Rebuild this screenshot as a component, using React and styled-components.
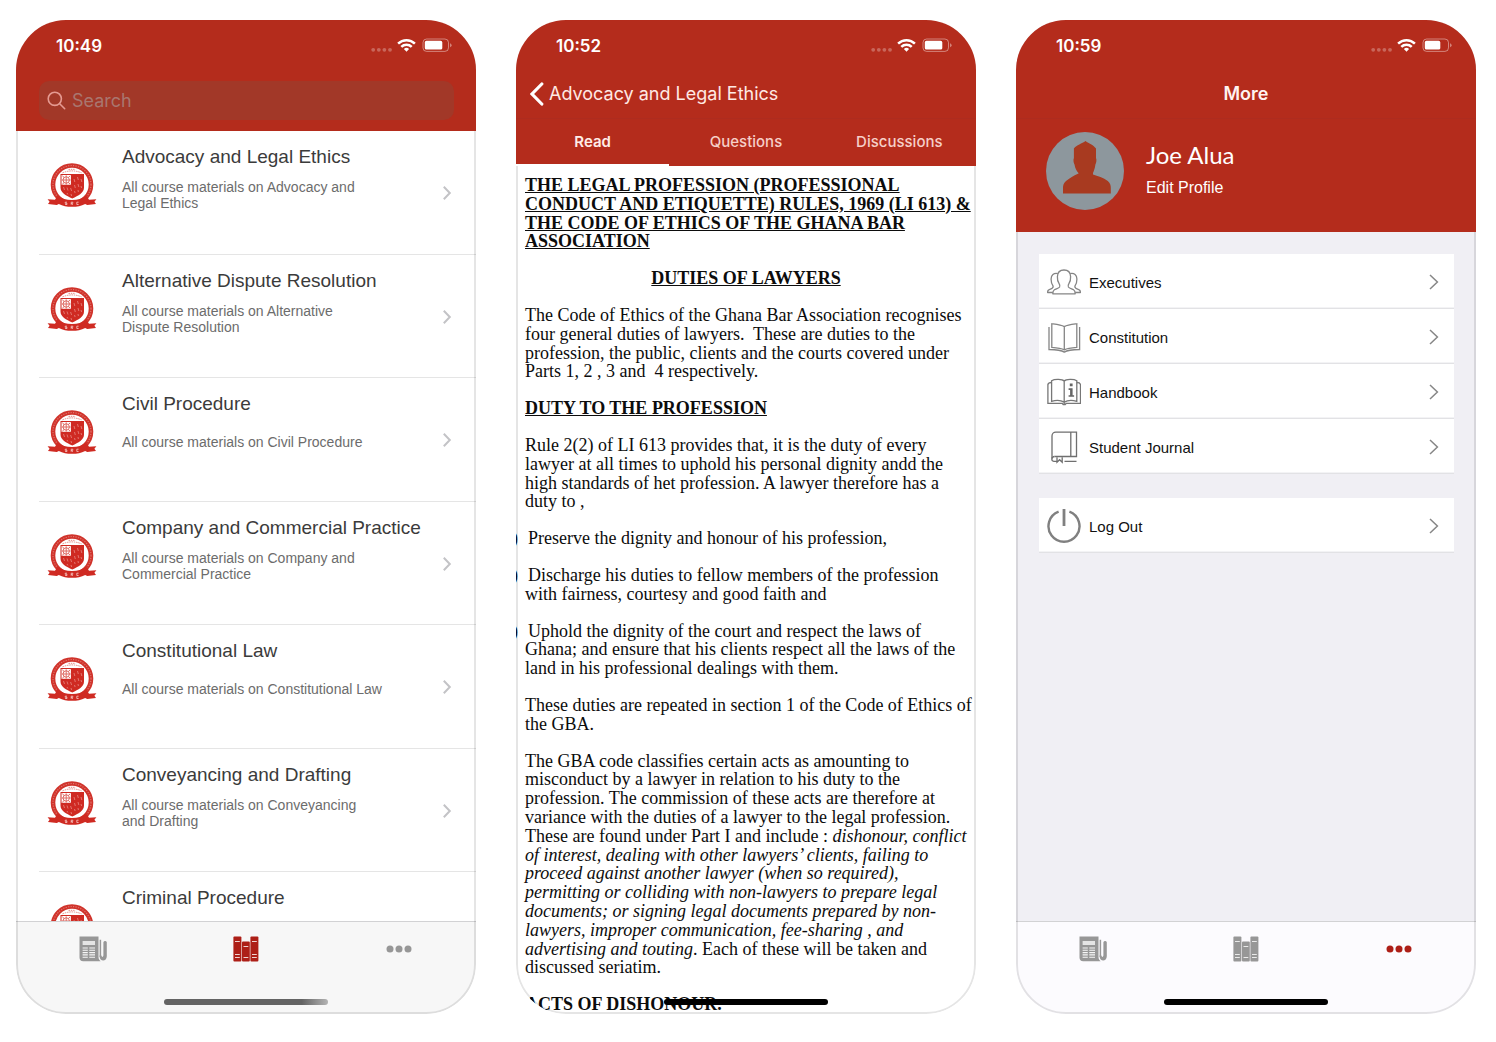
import React from "react";
import styled, { createGlobalStyle } from "styled-components";

const RED = "#b42c1c";
const SANS = '"Liberation Sans", Arial, sans-serif';
const SYSTEM = 'Inter, "Liberation Sans", sans-serif';
const SERIF = '"Liberation Serif", "Times New Roman", serif';

const GlobalStyle = createGlobalStyle`
  *, *::before, *::after { box-sizing: border-box; }
  body { margin: 0; background: #fff; font-family: ${SANS}; }
  h1, h2, h3, p, ul, ol { margin: 0; padding: 0; }
  ul, ol { list-style: none; }
  button { border: 0; background: none; padding: 0; font: inherit; color: inherit; cursor: pointer; }
  a { color: inherit; text-decoration: none; }
  svg { display: block; flex: none; }
`;

const Gallery = styled.main`
  display: grid;
  grid-template-columns: repeat(3, minmax(0, 1fr));
  gap: 40px;
  padding: 20px 20px 28px 16px;
`;

const Phone = styled.section`
  position: relative;
  display: flex;
  flex-direction: column;
  aspect-ratio: 230 / 497;
  min-height: 0;
  overflow: hidden;
  border-radius: 50px;
  background: ${(p) => p.$bg || "#fff"};
`;

const Header = styled.header`
  position: relative;
  z-index: 2;
  flex: none;
  background: ${RED};
  color: #fff;
`;

const Content = styled.div`
  flex: 1;
  min-height: 0;
  display: flex;
  flex-direction: column;
`;

const Outline = styled.div`
  position: absolute;
  inset: 0;
  z-index: 1;
  border: 2px solid rgba(0, 0, 0, 0.1);
  border-radius: 50px;
  pointer-events: none;
`;

const HomeIndicator = styled.div`
  position: absolute;
  left: 50%;
  bottom: 9px;
  width: 164px;
  height: 6px;
  margin-left: -82px;
  border-radius: 3px;
  background: ${(p) => (p.$faded ? "linear-gradient(90deg, #646464 0 84%, #b4b4b4 100%)" : "#000")};
`;

/* Status bar */

const StatusRow = styled.div`
  display: flex;
  align-items: center;
  height: 50px;
  padding: 0 24px 0 40px;
  font-family: ${SYSTEM};
`;

const Time = styled.time`
  flex: 1;
  padding-top: 1px;
  font-size: 17px;
  font-weight: 600;
  line-height: 24px;
`;

function StatusBar({ time, charge }) {
  return (
    <StatusRow>
      <Time>{time}</Time>
      <svg width="82" height="18" viewBox="0 0 82 18" aria-hidden="true">
        <g fill="#fff" opacity="0.28">
          <circle cx="3.2" cy="13.8" r="1.9" />
          <circle cx="8.8" cy="13.8" r="1.9" />
          <circle cx="14.4" cy="13.8" r="1.9" />
          <circle cx="20" cy="13.8" r="1.9" />
        </g>
        <g fill="none" stroke="#fff" strokeWidth="2.5">
          <path d="M28.1 7.6a12 12 0 0 1 16.8 0" />
          <path d="M31.3 10.9a7.4 7.4 0 0 1 10.4 0" />
        </g>
        <path fill="#fff" d="M33.9 13.1a3.7 3.7 0 0 1 5.2 0l-2.6 2.7z" />
        <rect x="53" y="3" width="25.5" height="12.4" rx="3.6" fill="none" stroke="#fff" strokeOpacity="0.42" />
        <rect x="54.8" y="4.8" width={charge} height="8.8" rx="1.6" fill="#fff" />
        <path d="M80.2 7.2a2.2 2.2 0 0 1 0 4z" fill="#fff" fillOpacity="0.5" />
      </svg>
    </StatusRow>
  );
}

/* Icons */

const Chevron = ({ color }) => (
  <svg width="10" height="16" viewBox="0 0 10 16" fill="none" stroke={color} strokeWidth="1.5" aria-hidden="true">
    <path d="M1 1l7.4 7L1 15" />
  </svg>
);

const SmallChevron = ({ color }) => (
  <svg width="10" height="16" viewBox="0 0 10 16" fill="none" stroke={color} strokeWidth="2" aria-hidden="true">
    <path d="M1.800 1.800L7.800 8l-6 6.200" />
  </svg>
);

const NewsIcon = () => (
  <svg width="28" height="26" viewBox="0 0 28 26" aria-hidden="true">
    <path fill="currentColor" d="M.5.5h19v20.400c0 1.700.6 3 2.200 4.300H4.200A3.700 3.700 0 0 1 .5 21.500z" />
    <path fill="none" stroke="currentColor" strokeWidth="1.500" d="M21.400 3.800v17.200" />
    <path fill="currentColor" d="M20.600 19.500h1.800c.3 1.800 1.700 1.900 2 0V6.200a1.800 1.800 0 0 1 3.400 0v14c0 5.600-7.200 5.600-7.200 0z" />
    <rect x="3.600" y="5" width="12.400" height="4" fill="#f7f7f7" opacity=".8" />
    <path stroke="#f7f7f7" strokeWidth="1.100" d="M3.600 12h5.200M3.600 14.300h5.200M3.600 16.600h5.200M3.600 18.900h5.200M3.600 21.200h5.200M10.300 12H16M10.300 14.300H16M10.300 16.600H16M10.300 18.900H16M10.300 21.200H16" />
  </svg>
);

const BooksIcon = () => (
  <svg width="26" height="26" viewBox="0 0 26 26" aria-hidden="true">
    <g fill="currentColor">
      <rect x=".4" y=".5" width="8" height="25" rx="1" />
      <rect x="9" y="5.600" width="7.800" height="19.900" rx="1" />
      <rect x="17.400" y=".5" width="8" height="25" rx="1" />
    </g>
    <path stroke="#fff" strokeWidth=".9" opacity=".9" d="M2 5.500h4.800M2 18.500h4.800M2 21.500h4.800M10.500 10.500h4.800M10.500 21.500h4.800M19 5.500h4.800M19 18.500h4.800M19 21.500h4.800" />
  </svg>
);

const DotsIcon = () => (
  <svg width="26" height="8" viewBox="0 0 26 8" fill="currentColor" aria-hidden="true">
    <circle cx="4" cy="4" r="3.500" />
    <circle cx="13" cy="4" r="3.500" />
    <circle cx="22" cy="4" r="3.500" />
  </svg>
);

const Seal = () => (
  <svg width="50" height="44" viewBox="0 0 50 44" aria-hidden="true">
    <circle cx="25" cy="21.500" r="19" fill="#fff" stroke="#d0332b" strokeWidth="4.600" />
    <circle cx="25" cy="21.500" r="19" fill="none" stroke="#e0736c" strokeWidth="1.200" strokeDasharray="1.200 1.300" />
    <path fill="none" stroke="#e58a84" strokeWidth="1" strokeDasharray="1.500 .8" d="M15.500 9.800q9.500-3.800 19 0M21.500 6.300h7" />
    <path fill="#cf2a22" d="M13.500 11h23.500v13.500c0 5.500-5.600 8-11.700 11-6.200-3-11.800-5.500-11.800-11z" />
    <path fill="#fff" d="M14.500 12h9.400v9.800h-9.400z" />
    <g fill="none" stroke="#df6a63" strokeWidth="1">
      <circle cx="19.200" cy="17" r="3.200" />
      <path d="M19.200 12.400v9.200M14.800 17h8.800M15.300 12.800l2 1.800M23.200 12.800l-2 1.800M15.300 21.200l2-1.800M23.200 21.200l-2-1.800" />
    </g>
    <path
      stroke="#e47e77"
      strokeWidth=".9"
      fill="none"
      d="M27 16l.8 3M30.500 14l.8 3M34 16l.8 3M27.500 22l.8 3M31 21l.8 3M34 23l.6 2M16.500 24l1 3M20 24.500l1 3M23.600 25l1 3M27.500 28l.6 2M31 27l.4 2M20 30l.8 1.500M24 31l.6 2"
    />
    <path fill="#cf2a22" d="M.6 36.200l7.400.6 2.600-4.300c4 3.300 8.600 4.600 14.400 4.600s10.400-1.300 14.400-4.600l2.600 4.300 7.400-.6-2 2.600 1.600 2.300-8.800.8-2-1c-4 2-8 2.900-13.200 2.900s-9.200-.9-13.200-2.900l-2 1-8.800-.8 1.600-2.300z" />
    <path stroke="#f6c9c5" strokeWidth=".8" fill="none" d="M20 39.200h-1.800v1.100H20v1.200h-1.900M24.200 41.800v-2.600h1.600v1.200h-1.400l1.500 1.400M31.600 39.200h-1.800v2.300h1.800" />
  </svg>
);

const PeopleIcon = () => (
  <svg width="34" height="34" viewBox="1 0 34 34" fill="none" stroke="#858585" strokeWidth="1.300" strokeLinejoin="round" aria-hidden="true">
    <path d="M6.800 28.800h22.400c0-2-.2-3.200-1.600-4-1.800-1-4.400-1.400-5.200-2.800-.5-1-.2-2.300.5-3.300 1.400-2 1.900-4 1.700-7.200C24.400 7.200 21.700 5 18 5s-6.400 2.200-6.600 6.500c-.2 3.200.3 5.200 1.700 7.200.7 1 1 2.300.5 3.300-.8 1.400-3.400 1.800-5.200 2.800-1.400.8-1.600 2-1.600 4z" />
    <path d="M11.800 8.600c-4-.8-6.800 1.300-6.700 5.600.1 2.800.3 4.200 1.500 6 .8 1.200.6 2.200-.3 2.900-1.400.9-3.200 1.200-4 2.100-.6.700-.7 1.300-.7 2.300h5.300M24.200 8.600c4-.8 6.800 1.300 6.700 5.600-.1 2.800-.3 4.200-1.500 6-.8 1.200-.6 2.200.3 2.900 1.400.9 3.200 1.200 4 2.100.6.700.7 1.300.7 2.300h-5.300" />
  </svg>
);

const OpenBookIcon = () => (
  <svg width="34" height="34" viewBox="1 1 34 34" fill="none" stroke="#858585" strokeWidth="1.300" aria-hidden="true">
    <path d="M18.300 7.600C15 5.800 10.600 5.400 5.800 4.800v23.600c4.800.4 9.200.8 12.500 2.400 3.300-1.600 7.700-2 12.500-2.400V4.800c-4.800.6-9.200 1-12.500 2.800zM18.300 7.600v23.200" />
    <path d="M3 8v22.500c5.800.1 12.200.6 15.300 2.600 3.100-2 9.500-2.500 15.300-2.600V8" />
  </svg>
);

const InfoBookIcon = () => (
  <svg width="34" height="34" viewBox="1 1 34 34" fill="none" stroke="#777" strokeWidth="1.300" aria-hidden="true">
    <path d="M18.200 7c-1.800-2-9.600-2.200-12.600-.3v20.600c4-1.300 9.600-1 12.600.8 3-1.800 8.600-2.100 12.600-.8V6.700c-3-1.900-10.800-1.700-12.600.3zM18.200 7v24" />
    <path d="M5.600 8.500c-2 0-3.400.6-3.700 2v18.800h14.300l1 1.200h2l1-1.200h14.300V10.500c-.3-1.400-1.700-2-3.700-2" />
    <path fill="#666" stroke="none" d="M23.800 9.600h2.800v2.600h-2.800zM22.600 14.300h4v6.900h1.500v1.600h-5.500v-1.600h1.500v-5.300h-1.500z" />
  </svg>
);

const JournalIcon = () => (
  <svg width="34" height="34" viewBox="1 1 34 34" fill="none" stroke="#6f6f6f" strokeWidth="1.300" aria-hidden="true">
    <path d="M8.500 27.500h22V3.200H9.800A3.800 3.800 0 0 0 6 7v22.500M24.800 3.200v24.300" />
    <path d="M8.500 27.500C5.200 27.800 5 32 7.800 32.400h2.700M11 28.300v5l2.600-2.600 2.600 2.600v-5M18.500 32.400h12" />
  </svg>
);

const PowerIcon = () => (
  <svg width="34" height="34" viewBox="1 1 34 34" fill="none" stroke="#808080" strokeWidth="2.400" aria-hidden="true">
    <path d="M12.600 3.700a15.500 15.500 0 1 0 10.800 0" />
    <path strokeWidth="2.800" d="M18 1v17" />
  </svg>
);

/* Bottom tab bar */

const TabNav = styled.nav`
  display: grid;
  grid-template-columns: repeat(3, 1fr);
  flex: none;
  height: 93px;
  padding-bottom: 38px;
  border-top: 1px solid #d2d2d4;
  background: ${(p) => p.$bg};
`;

const TabButton = styled.button`
  display: grid;
  place-items: center;
  color: ${(p) => (p.$active ? "#ad1f17" : "#979797")};
`;

function TabBar({ active, bg }) {
  return (
    <TabNav $bg={bg} aria-label="Main">
      <TabButton type="button" aria-label="News" $active={active === "news"}><NewsIcon /></TabButton>
      <TabButton type="button" aria-label="Courses" $active={active === "courses"}><BooksIcon /></TabButton>
      <TabButton type="button" aria-label="More" $active={active === "more"}><DotsIcon /></TabButton>
    </TabNav>
  );
}

/* Courses screen */

const SearchBox = styled.label`
  display: flex;
  align-items: center;
  gap: 6px;
  height: 39px;
  margin: 11px 22px 0 23px;
  padding: 0 8px;
  border-radius: 10px;
  background: #a23828;
`;

const SearchInput = styled.input`
  flex: 1;
  min-width: 0;
  border: 0;
  padding: 0;
  outline: 0;
  background: none;
  color: #fff;
  font: 400 18px/24px ${SYSTEM};
  &::placeholder { color: #a9766f; opacity: 1; }
`;

const HeaderSpace = styled.div`
  height: 11px;
`;

const CourseList = styled.ul`
  flex: 1;
  min-height: 0;
  overflow: hidden;
  display: grid;
  grid-template-rows: repeat(6, minmax(0, 1fr)) 49px;
  padding-left: 23px;
`;

const CourseItem = styled.li`
  border-bottom: 1px solid #e5e5e5;
  &:last-child { border-bottom: 0; }
`;

const CourseLink = styled.a`
  display: grid;
  grid-template-columns: 50px minmax(0, 1fr) 10px;
  column-gap: 25px;
  height: 100%;
  padding: 14px 24px 0 8px;
`;

const SealSlot = styled.span`
  padding-top: 18px;
`;

const ChevronSlot = styled.span`
  padding-top: 40px;
`;

const CourseTitle = styled.h2`
  color: #3b3b3b;
  font-size: 19px;
  font-weight: 400;
  line-height: 24px;
  white-space: nowrap;
`;

const CourseNote = styled.p`
  display: flex;
  align-items: center;
  height: 32px;
  margin-top: 10px;
  color: #6c6c6c;
  font-size: 14px;
  line-height: 16px;
  white-space: pre-line;
`;

const courses = [
  ["Advocacy and Legal Ethics", "All course materials on Advocacy and\nLegal Ethics"],
  ["Alternative Dispute Resolution", "All course materials on Alternative\nDispute Resolution"],
  ["Civil Procedure", "All course materials on Civil Procedure"],
  ["Company and Commercial Practice", "All course materials on Company and\nCommercial Practice"],
  ["Constitutional Law", "All course materials on Constitutional Law"],
  ["Conveyancing and Drafting", "All course materials on Conveyancing\nand Drafting"],
  ["Criminal Procedure", ""],
];

function CoursesScreen() {
  return (
    <Phone>
      <Header>
        <StatusBar time="10:49" charge="17.5" />
        <SearchBox>
          <svg width="19" height="19" viewBox="0 0 19 19" fill="none" stroke="#e59a91" strokeWidth="1.600" strokeLinecap="round" aria-hidden="true">
            <circle cx="7.800" cy="7.800" r="6.600" />
            <path d="M12.700 12.700l5 5" />
          </svg>
          <SearchInput type="search" placeholder="Search" aria-label="Search" />
        </SearchBox>
        <HeaderSpace />
      </Header>
      <Content>
        <CourseList>
          {courses.map(([title, note]) => (
            <CourseItem key={title}>
              <CourseLink href="#course">
                <SealSlot><Seal /></SealSlot>
                <div>
                  <CourseTitle>{title}</CourseTitle>
                  {note && <CourseNote>{note}</CourseNote>}
                </div>
                {note && <ChevronSlot><SmallChevron color="#c3c3c6" /></ChevronSlot>}
              </CourseLink>
            </CourseItem>
          ))}
        </CourseList>
        <TabBar active="courses" bg="#f7f7f7" />
      </Content>
      <Outline />
      <HomeIndicator $faded />
    </Phone>
  );
}

/* Reader screen */

const NavRow = styled.div`
  display: flex;
  align-items: center;
  justify-content: ${(p) => (p.$center ? "center" : "flex-start")};
  height: 49px;
  padding: 0 13px;
  border-bottom: 1px solid #ae2c1f;
  font-family: ${SYSTEM};
`;

const BackButton = styled.button`
  display: flex;
  align-items: center;
  gap: 5px;
  font-size: 18px;
  line-height: 24px;
  color: #ffe9e4;
`;

const SegmentRow = styled.div`
  display: grid;
  grid-template-columns: repeat(3, 1fr);
  height: 47px;
  font-family: ${SYSTEM};
`;

const Segment = styled.button`
  border-bottom: 2px solid ${(p) => (p.$active ? "#fff" : "transparent")};
  color: ${(p) => (p.$active ? "#ffece8" : "#f6cfc8")};
  font-size: 15px;
  font-weight: ${(p) => (p.$active ? 600 : 500)};
  line-height: 20px;
`;

const Article = styled.article`
  display: flex;
  flex-direction: column;
  gap: 18px;
  padding: 10px 9px 0 9px;
  color: #0c0c0c;
  font-family: ${SERIF};
  font-size: 18px;
  line-height: 1.045;
  white-space: pre;
`;

const Heading = styled.h2`
  font-size: 18px;
  font-weight: 700;
  text-align: ${(p) => (p.$center ? "center" : "left")};
  text-decoration: ${(p) => (p.$plain ? "none" : "underline")};
`;

const Clauses = styled.ol`
  display: flex;
  flex-direction: column;
  gap: 18px;
`;

const Marker = styled.span`
  display: inline-block;
  width: 16px;
  margin-left: -13px;
`;

function ReaderScreen() {
  return (
    <Phone>
      <Header>
        <StatusBar time="10:52" charge="17.5" />
        <NavRow>
          <BackButton type="button">
            <svg width="15" height="24" viewBox="0 0 15 24" fill="none" stroke="#fff" strokeWidth="3.200" strokeLinecap="round" aria-hidden="true">
              <path d="M12.800 2L3 12l9.800 10" />
            </svg>
            Advocacy and Legal Ethics
          </BackButton>
        </NavRow>
        <SegmentRow>
          <Segment type="button" $active>Read</Segment>
          <Segment type="button">Questions</Segment>
          <Segment type="button">Discussions</Segment>
        </SegmentRow>
      </Header>
      <Content>
        <Article>
          <Heading>{"THE LEGAL PROFESSION (PROFESSIONAL\nCONDUCT AND ETIQUETTE) RULES, 1969 (LI 613) &\nTHE CODE OF ETHICS OF THE GHANA BAR\nASSOCIATION"}</Heading>
          <Heading $center>DUTIES OF LAWYERS</Heading>
          <p>{"The Code of Ethics of the Ghana Bar Association recognises\nfour general duties of lawyers.  These are duties to the\nprofession, the public, clients and the courts covered under\nParts 1, 2 , 3 and  4 respectively."}</p>
          <Heading>DUTY TO THE PROFESSION</Heading>
          <p>{"Rule 2(2) of LI 613 provides that, it is the duty of every\nlawyer at all times to uphold his personal dignity andd the\nhigh standards of het profession. A lawyer therefore has a\nduty to ,"}</p>
          <Clauses>
            <li><Marker>)</Marker>{"Preserve the dignity and honour of his profession,"}</li>
            <li><Marker>)</Marker>{"Discharge his duties to fellow members of the profession\nwith fairness, courtesy and good faith and"}</li>
            <li><Marker>)</Marker>{"Uphold the dignity of the court and respect the laws of\nGhana; and ensure that his clients respect all the laws of the\nland in his professional dealings with them."}</li>
          </Clauses>
          <p>{"These duties are repeated in section 1 of the Code of Ethics of\nthe GBA."}</p>
          <p>
            {"The GBA code classifies certain acts as amounting to\nmisconduct by a lawyer in relation to his duty to the\nprofession. The commission of these acts are therefore at\nvariance with the duties of a lawyer to the legal profession.\nThese are found under Part I and include : "}
            <em>{"dishonour, conflict\nof interest, dealing with other lawyers’ clients, failing to\nproceed against another lawyer (when so required),\npermitting or colliding with non-lawyers to prepare legal\ndocuments; or signing legal documents prepared by non-\nlawyers, improper communication, fee-sharing , and\nadvertising and touting"}</em>
            {". Each of these will be taken and\ndiscussed seriatim."}
          </p>
          <Heading $plain>ACTS OF DISHONOUR.</Heading>
        </Article>
      </Content>
      <Outline />
      <HomeIndicator />
    </Phone>
  );
}

/* More screen */

const ScreenTitle = styled.h1`
  font-size: 18px;
  font-weight: 600;
  line-height: 24px;
  color: #fff3f0;
`;

const Profile = styled.div`
  display: flex;
  align-items: flex-start;
  gap: 22px;
  height: 113px;
  padding: 13px 30px;
`;

const ProfileText = styled.div`
  display: flex;
  flex-direction: column;
  align-items: flex-start;
  gap: 9px;
  padding-top: 9px;
`;

const ProfileName = styled.h2`
  font-family: Lato, ${SANS};
  font-size: 24px;
  font-weight: 400;
  line-height: 28px;
`;

const EditLink = styled.a`
  font-size: 16px;
  line-height: 20px;
`;

const Menu = styled.nav`
  flex: 1;
  display: flex;
  flex-direction: column;
  gap: 24px;
  padding: 22px 22px 0 23px;
`;

const MenuLink = styled.a`
  display: flex;
  align-items: center;
  gap: 8px;
  height: 55px;
  padding: 2px 15px 0 8px;
  border-bottom: 1px solid #e2e2e5;
  box-shadow: inset 0 -1px 0 #f3f3f5;
  background: #fff;
  color: #111;
  font-size: 15px;
`;

const MenuLabel = styled.span`
  flex: 1;
`;

const menuGroups = [
  [
    ["Executives", PeopleIcon],
    ["Constitution", OpenBookIcon],
    ["Handbook", InfoBookIcon],
    ["Student Journal", JournalIcon],
  ],
  [["Log Out", PowerIcon]],
];

function MoreScreen() {
  return (
    <Phone $bg="#f0eff4">
      <Header>
        <StatusBar time="10:59" charge="15.500" />
        <NavRow $center><ScreenTitle>More</ScreenTitle></NavRow>
        <Profile>
          <svg width="78" height="78" viewBox="0 0 78 78" role="img" aria-label="Profile picture">
            <circle cx="39" cy="39" r="39" fill="#8d979d" />
            <path
              fill="#a83a20"
              d="M39.500 9c3.500 2.500 7.500 3.500 10.500 7.500v9.500c.8 1.500.4 5-.6 6.500-.5 4-1.400 6-2.400 8.500v1.500c4.500 1.600 10.500 3 14.800 6.500 2.600 2.200 3 4.500 3 7V61.500H17V56c0-2.500.4-4.800 3-7 4.300-3.500 8-5.500 12.500-7.500V41c-1.800-2-3.400-4.500-4-8.500-1-1.500-1.400-5-.6-6.500v-9.500C30.500 13 36 11.500 39.500 9z"
            />
          </svg>
          <ProfileText>
            <ProfileName>Joe Alua</ProfileName>
            <EditLink href="#profile">Edit Profile</EditLink>
          </ProfileText>
        </Profile>
      </Header>
      <Content>
        <Menu aria-label="More">
          {menuGroups.map((group) => (
            <ul key={group[0][0]}>
              {group.map(([label, Icon]) => (
                <li key={label}>
                  <MenuLink href="#item">
                    <Icon />
                    <MenuLabel>{label}</MenuLabel>
                    <Chevron color="#868686" />
                  </MenuLink>
                </li>
              ))}
            </ul>
          ))}
        </Menu>
        <TabBar active="more" bg="#fcfbfe" />
      </Content>
      <Outline />
      <HomeIndicator />
    </Phone>
  );
}

export default function App() {
  return (
    <>
      <GlobalStyle />
      <Gallery>
        <CoursesScreen />
        <ReaderScreen />
        <MoreScreen />
      </Gallery>
    </>
  );
}
